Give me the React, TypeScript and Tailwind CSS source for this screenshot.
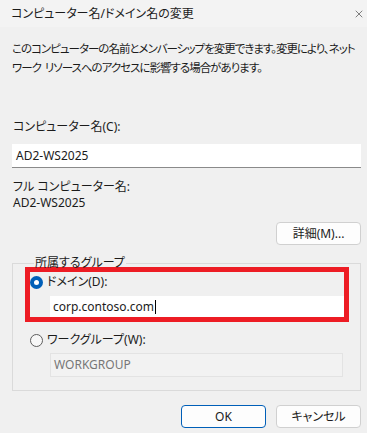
import { X } from 'lucide-react';

const FONT = "font-['Noto_Sans','Noto_Sans_CJK_JP',sans-serif] [font-feature-settings:'palt']";

function Radio({ checked, label }: { checked?: boolean; label: string }) {
  return (
    <div className="flex h-[20px] items-center">
      {checked ? (
        <span className="flex size-[13px] items-center justify-center rounded-full bg-[#005fb8]">
          <span className="size-[5px] rounded-full bg-white" />
        </span>
      ) : (
        <span className="size-[13px] rounded-full border border-[#5d5d5d] bg-[#f7f7f7]" />
      )}
      <span className="ml-[4px] text-[12px] leading-[16px]">{label}</span>
    </div>
  );
}

function DialogButton({ label, primary }: { label: string; primary?: boolean }) {
  return (
    <button
      type="button"
      className={
        primary
          ? 'h-[23px] w-[85px] rounded-[4px] border border-[#005fb8] bg-[#fdfdfd] text-[12px] leading-none text-[#1b1b1b]'
          : 'h-[23px] w-[85px] rounded-[4px] border border-[#d0d0d0] bg-[#fdfdfd] text-[12px] leading-none text-[#1b1b1b]'
      }
    >
      {label}
    </button>
  );
}

export default function App() {
  return (
    <div className={`flex h-[433px] w-[367px] flex-col overflow-hidden bg-[#f0f0f0] text-[#1b1b1b] ${FONT}`}>
      {/* title bar */}
      <div className="flex h-[27px] items-center justify-between bg-[#f3f3f3] pl-[11px] pr-[2px]">
        <span className="text-[12px] leading-none">コンピューター名/ドメイン名の変更</span>
        <X className="size-[12px] text-[#1b1b1b]" strokeWidth={1.1} />
      </div>

      <div className="flex flex-col pl-[12px] pr-[6px]">
        <p className="mt-[12px] whitespace-nowrap text-[11.5px] leading-[19px] tracking-[-1px]">
          このコンピューターの名前とメンバーシップを変更できます。変更により、ネット
          <br />
          ワーク&nbsp;&nbsp;リソースへのアクセスに影響する場合があります。
        </p>

        <div className="mt-[42px] pl-px text-[12px] leading-[16px]">コンピューター名(C):</div>
        <div className="mt-[9px] flex h-[24px] items-center border-b border-[#8a8a8a] bg-white pl-[4px] text-[12px]">
          AD2-WS2025
        </div>

        <div className="mt-[11px] pl-px text-[12px] leading-[16px]">フル コンピューター名:</div>
        <div className="pl-px text-[12px] leading-[16px]">AD2-WS2025</div>

        <div className="mt-[11px] flex justify-end">
          <DialogButton label="詳細(M)..." />
        </div>

        <fieldset className="mt-[12px] w-[349px] border border-[#dadada] pb-[13px] pl-[12px] pr-[11px]">
          <legend className="ml-[9px] px-px text-[12px] leading-[12px]">所属するグループ</legend>

          <div className="-mt-[2px] w-[324px] border-[5px] border-[#ed1c24]">
            <Radio checked label="ドメイン(D):" />
            <div className="ml-[20px] mt-[4px] flex h-[21px] items-center bg-white pl-[3px] text-[12px]">
              corp.contoso.com
              <span className="ml-px h-[14px] w-px bg-black" />
            </div>
          </div>

          <div className="mt-[8px] pl-[5px]">
            <Radio label="ワークグループ(W):" />
          </div>
          <div className="ml-[25px] mt-[3px] flex h-[24px] w-[293px] items-center border border-[#e3e3e3] bg-[#f2f2f2] pl-[3px] text-[12px] text-[#777777]">
            WORKGROUP
          </div>
        </fieldset>

        <div className="mt-[14px] flex justify-end gap-[10px]">
          <DialogButton primary label="OK" />
          <DialogButton label="キャンセル" />
        </div>
      </div>
    </div>
  );
}
